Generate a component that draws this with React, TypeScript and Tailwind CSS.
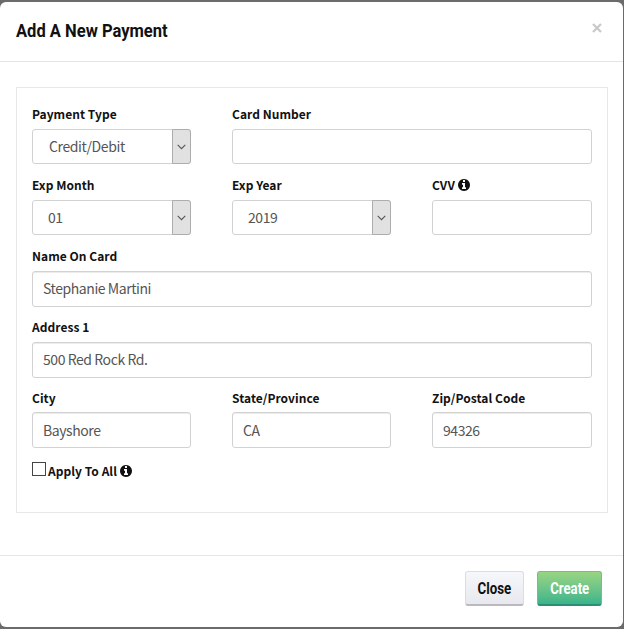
import React, { useState } from "react";

interface FieldProps {
    label: string;
    info?: boolean;
    className?: string;
    children: React.ReactNode;
}

const inputStyle =
    "block w-full rounded-[3px] border border-[#d2d2d2] bg-white pl-2.5 pr-2 text-[14px] tracking-[-0.43px] text-[#555] outline-none";

const InfoIcon = () => (
    <svg className="size-3 shrink-0" viewBox="128 128 1536 1536" fill="#111">
        <path d="M1152 1376v-160q0-14-9-23t-23-9h-96v-512q0-14-9-23t-23-9h-320q-14 0-23 9t-9 23v160q0 14 9 23t23 9h96v320h-96q-14 0-23 9t-9 23v160q0 14 9 23t23 9h448q14 0 23-9t9-23zm-128-896v-192q0-14-9-23t-23-9h-192q-14 0-23 9t-9 23v192q0 14 9 23t23 9h192q14 0 23-9t9-23zm640 416q0 209-103 385.5t-279.5 279.5-385.5 103-385.5-103-279.5-279.5-103-385.5 103-385.5 279.5-279.5 385.5-103 385.5 103 279.5 279.5 103 385.5z" />
    </svg>
);

const Field = ({ label, info, className = "", children }: FieldProps) => (
    <div className={className}>
        <label className="mb-0.5 flex h-[26px] items-center gap-[3px] whitespace-nowrap text-[12px] leading-[26px] font-bold tracking-[0.04px] text-[#111]">
            {label}
            {info && <InfoIcon />}
        </label>
        {children}
    </div>
);

const SelectBox = ({ value, indent }: { value: string; indent: string }) => (
    <button
        type="button"
        className="flex h-[35px] w-full rounded-[3px] border border-[#d2d2d2] bg-white text-left text-[14px] tracking-[-0.4px] text-[#555]"
    >
        <span className={`flex-1 leading-[33px] ${indent}`}>{value}</span>
        <span className="-my-px -mr-px flex h-[35px] w-[19px] items-center justify-center rounded-r-[3px] border border-[#adadad] bg-[#e1e1e1]">
            <svg width="9" height="6" viewBox="0 0 9 6" fill="none" stroke="#555" strokeWidth="1.1">
                <path d="M0.7 0.9 L4.5 4.7 L8.3 0.9" />
            </svg>
        </span>
    </button>
);

const App = () => {
    const [name, setName] = useState("Stephanie Martini");
    const [address, setAddress] = useState("500 Red Rock Rd.");
    const [city, setCity] = useState("Bayshore");
    const [state, setState] = useState("CA");
    const [zip, setZip] = useState("94326");
    const [applyAll, setApplyAll] = useState(false);

    return (
        <div className="h-[629px] w-[624px] bg-[#6b6b6b] pt-[2px] pr-px font-['Noto_Sans_CJK_SC',sans-serif]">
            <div className="flex h-[625px] flex-col rounded-[6px] bg-white">
                <div className="flex h-[60px] shrink-0 items-start justify-between border-b border-[#e5e5e5] pl-4 pr-[21px]">
                    <h4 className="mt-[14px] origin-left scale-x-[0.87] whitespace-nowrap font-[Roboto] text-[19px] leading-[29px] font-bold text-[#111]">
                        Add A New Payment
                    </h4>
                    <button type="button" aria-label="Close dialog" className="mt-[21px]">
                        <svg width="10" height="10" viewBox="0 0 10 10" stroke="#c8c8c8" strokeWidth="2.2">
                            <path d="M1 1 L9 9 M9 1 L1 9" />
                        </svg>
                    </button>
                </div>

                <div className="mr-[15px] ml-4 mt-[25px] h-[426px] border border-[#e8e8e8] px-[15px] pt-[13px]">
                    <div className="grid grid-cols-[159px_159px_160px] gap-x-[41px]">
                        <Field label="Payment Type" className="h-[71px]">
                            <SelectBox value="Credit/Debit" indent="pl-4" />
                        </Field>
                        <Field label="Card Number" className="col-span-2 h-[71px]">
                            <input className={`${inputStyle} h-[35px]`} />
                        </Field>
                        <Field label="Exp Month" className="h-[71px]">
                            <SelectBox value="01" indent="pl-[15px]" />
                        </Field>
                        <Field label="Exp Year" className="h-[71px]">
                            <SelectBox value="2019" indent="pl-[15px]" />
                        </Field>
                        <Field label="CVV" info className="h-[71px]">
                            <input className={`${inputStyle} h-[35px]`} />
                        </Field>
                        <Field label="Name On Card" className="col-span-3 h-[71px]">
                            <input className={`${inputStyle} h-9 pb-[3px] shadow-[inset_0_1px_0_#ececec]`} value={name} onChange={(e) => setName(e.target.value)} />
                        </Field>
                        <Field label="Address 1" className="col-span-3 h-[71px]">
                            <input className={`${inputStyle} h-9 pb-[3px] shadow-[inset_0_1px_0_#ececec]`} value={address} onChange={(e) => setAddress(e.target.value)} />
                        </Field>
                        <Field label="City" className="[&>label]:mb-px">
                            <input className={`${inputStyle} h-9 pb-px shadow-[inset_0_1px_0_#ececec]`} value={city} onChange={(e) => setCity(e.target.value)} />
                        </Field>
                        <Field label="State/Province" className="[&>label]:mb-px">
                            <input className={`${inputStyle} h-9 pb-px shadow-[inset_0_1px_0_#ececec]`} value={state} onChange={(e) => setState(e.target.value)} />
                        </Field>
                        <Field label="Zip/Postal Code" className="[&>label]:mb-px">
                            <input className={`${inputStyle} h-9 pb-px shadow-[inset_0_1px_0_#ececec]`} value={zip} onChange={(e) => setZip(e.target.value)} />
                        </Field>
                    </div>
                    <label className="mt-[13px] flex items-start text-[12px] leading-5 font-bold tracking-[0.04px] text-[#111]">
                        <input
                            type="checkbox"
                            checked={applyAll}
                            onChange={(e) => setApplyAll(e.target.checked)}
                            className="mt-px mr-0.5 size-[14px] appearance-none border border-[#444] bg-white checked:bg-[#444]"
                        />
                        <span className="mr-[3px]">Apply To All</span>
                        <span className="mt-1">
                            <InfoIcon />
                        </span>
                    </label>
                </div>

                <div className="mt-auto flex h-[72px] shrink-0 justify-end gap-[13px] border-t border-[#e5e5e5] pt-[15px] pr-[21px] font-[Roboto] text-[16px] font-bold">
                    <button
                        type="button"
                        className="h-[35px] w-[59px] rounded-[3px] border border-b-2 border-[#dcdce4] border-b-[#b9b9bf] bg-linear-to-b from-[#f6f7fb] to-[#e8e9ee] pt-0.5 text-[#111]"
                    >
                        <span className="inline-block scale-x-[0.83]">Close</span>
                    </button>
                    <button
                        type="button"
                        className="h-[35px] w-[65px] rounded-[3px] border border-b-2 border-[#74c080] border-b-[#2b9072] bg-linear-to-b from-[#98d582] to-[#38b48b] pt-0.5 text-white"
                    >
                        <span className="inline-block scale-x-[0.82]">Create</span>
                    </button>
                </div>
            </div>
        </div>
    );
};

export default App;
